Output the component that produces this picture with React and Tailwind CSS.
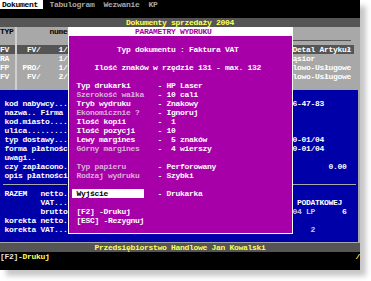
import React from 'react';

// one text-mode row: 9px tall, monospace cells of 4.5px
function Line({ children, className = '' }) {
  return (
    <div className={`h-[9px] leading-[9px] whitespace-pre overflow-hidden ${className}`}>
      {children}
    </div>
  );
}

function Rule({ className = '' }) {
  return (
    <div className="h-[9px] flex items-center">
      <div className={`h-px ${className}`} />
    </div>
  );
}

const params = [
  ['Typ drukarki', 'HP Laser', false],
  ['Szerokość wałka', '10 cali', true],
  ['Tryb wydruku', 'Znakowy', false],
  ['Ekonomicznie ?', 'Ignoruj', true],
  ['Ilość kopii', ' 1', false],
  ['Ilość pozycji', '10', false],
  ['Lewy margines', ' 5 znaków', false],
  ['Górny margines', ' 4 wierszy', true],
];

function Param({ label, value, dim }) {
  return (
    <Line>
      {'  '}
      <span className={dim ? 'text-[#d8b0d8]' : 'text-white'}>{label.padEnd(18)}</span>
      <span className="text-white">{'- ' + value}</span>
    </Line>
  );
}

function PrintDialog() {
  return (
    <div className="absolute left-[67.5px] top-[27px] w-[225px] h-[207px] bg-[#a800a8] text-white shadow-[inset_1px_0_0_#fff,inset_-1px_0_0_#fff,inset_0_-1px_0_#fff]">
      <Line className="bg-white text-[#a800a8]">{'               PARAMETRY WYDRUKU'}</Line>
      <Line />
      <Line>{'           Typ dokumentu : Faktura VAT'}</Line>
      <Line />
      <Line>{'      Ilość znaków w rzędzie 131 - max. 132'}</Line>
      <Line />
      {params.map(([label, value, dim]) => (
        <Param key={label} label={label} value={value} dim={dim} />
      ))}
      <Line />
      <Param label="Typ papieru" value="Perforowany" dim />
      <Param label="Rodzaj wydruku" value="Szybki" dim />
      <Line />
      <Line>
        {' '}
        <span className="bg-white text-black">{' Wyjście        '}</span>
        {'   - Drukarka'}
      </Line>
      <Line />
      <Line>{'  [F2] -Drukuj'}</Line>
      <Line>{'  [ESC] -Rezygnuj'}</Line>
    </div>
  );
}

export default function App() {
  return (
    <div className="min-h-screen bg-white font-['Liberation_Mono',monospace] text-[8px] font-bold tracking-[-0.3px]">
      <div className="relative w-[360px] h-[270px] bg-black shadow-[6px_6px_5px_rgba(0,0,0,0.22)]">
        {/* menu */}
        <div className="flex h-[9px] leading-[9px] whitespace-pre">
          <span className="w-[43px] pl-[2px] bg-white text-black">Dokument</span>
          <span className="pl-[6.5px] text-[#a8a8a8]">{'Tabulogram  Wezwanie  KP'}</span>
        </div>
        <Line />
        <Line className="bg-[#555555] text-[#ffff55]">
          {'                            Dokumenty sprzedaży 2004'}
        </Line>

        {/* document list */}
        <div className="flex h-[63px] bg-[#a8a8a8] text-white">
          <div className="w-[15px]">
            <Line className="text-black">TYP</Line>
            <Line />
            <Line className="bg-[#555555]">FV</Line>
            <Line>RA</Line>
            <Line>FP</Line>
            <Line>FV</Line>
          </div>
          <div className="w-[2px] bg-[#cfcfcf]" />
          <div className="w-[50.5px] pl-[1px]">
            <Line className="text-black">{'       nume'}</Line>
            <Line />
            <Line className="bg-[#555555] -ml-[1px] pl-[1px]">{'  FV/    1/'}</Line>
            <Line>{'         1/'}</Line>
            <Line>{' PRO/    1/'}</Line>
            <Line>{'  FV/    2/'}</Line>
          </div>
          <div className="flex-1" />
          <div className="w-[67.5px]">
            <Line />
            <Rule className="w-[58px] bg-[#555555]" />
            <Line>
              <span className="inline-block w-[61px] bg-[#555555]">Detal Artykuł</span>
            </Line>
            <Line>ąsior</Line>
            <Line>lowo-Usługowe</Line>
            <Line>lowo-Usługowe</Line>
          </div>
        </div>

        {/* customer panel */}
        <div className="flex h-[153px] bg-[#0000a8] text-white border-b border-[#a8a8a8]">
          <div className="w-[67.5px]">
            <Line />
            <Line>{' kod nabywcy...'}</Line>
            <Line>{' nazwa.. Firma'}</Line>
            <Line>{' kod.miasto....'}</Line>
            <Line>{' ulica.........'}</Line>
            <Line>{' typ dostawy...'}</Line>
            <Line>{' forma płatnośc'}</Line>
            <Line>{' uwagi..'}</Line>
            <Line>{' czy zapłacono.'}</Line>
            <Line>{' opis płatności'}</Line>
            <Rule className="ml-[3px] w-[64px] bg-[#a8a8a8]" />
            <Line>{' RAZEM   netto.'}</Line>
            <Line>{'         VAT...'}</Line>
            <Line>{'         brutto'}</Line>
            <Line>{' korekta netto.'}</Line>
            <Line>{' korekta VAT...'}</Line>
          </div>
          <div className="flex-1" />
          <div className="w-[67.5px] border-r-2 border-[#a8a8a8]">
            <Line />
            <Line>6-47-83</Line>
            <Line />
            <Line />
            <Line />
            <Line>0-01/04</Line>
            <Line>0-01/04</Line>
            <Line />
            <Line>{'        0.00'}</Line>
            <Line />
            <Rule className="w-[63px] bg-[#a8a8a8]" />
            <Line />
            <Line>{' PODATKOWEJ'}</Line>
            <Line>
              <span className="text-[#c8c8e8]">{'04 LP'}</span>
              {'      6'}
            </Line>
            <Line />
            <Line className="text-[#c8c8e8]">{'    2'}</Line>
          </div>
        </div>

        <Line className="bg-[#555555] text-[#ffff55]">
          {'                     Przedsiębiorstwo Handlowe Jan Kowalski'}
        </Line>
        <div className="flex h-[9px] leading-[9px] whitespace-pre">
          <span className="text-[#e0e0e0]">[F2]</span>
          <span className="text-[#ffff55]">-Drukuj</span>
          <span className="ml-auto text-[#ffff55]">/</span>
        </div>
        <Line />

        <PrintDialog />
      </div>
    </div>
  );
}
